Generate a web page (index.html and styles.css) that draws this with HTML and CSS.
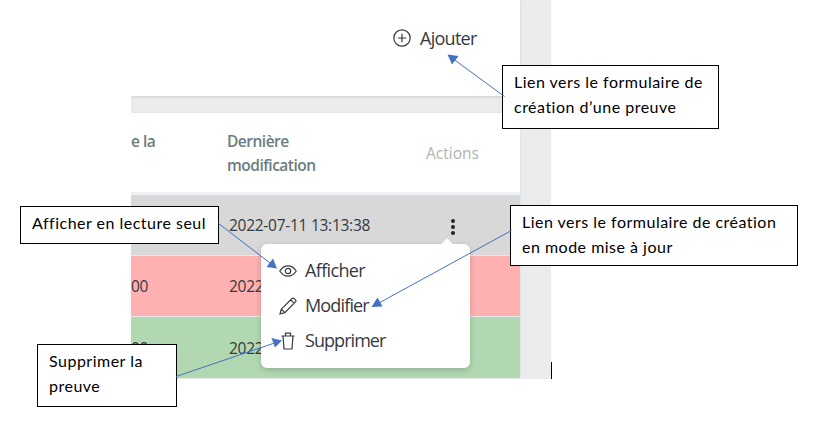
FILE: index.html
```html
<!DOCTYPE html>
<html lang="fr">
<head>
<meta charset="utf-8">
<title>Preuves</title>
<link rel="stylesheet" href="styles.css">
</head>
<body>
<main class="app">
  <section class="toolbar">
    <a class="add"><svg width="18" height="18" viewBox="0 0 18 18"><circle cx="9" cy="9" r="8.2"/><path d="M9 4.8v8.4M4.8 9h8.4"/></svg><span>Ajouter</span></a>
  </section>
  <section class="table">
    <div class="row head"><span>e la</span><span>Dernière<br>modification</span><span class="actions">Actions</span></div>
    <div class="row grey"><span></span><span class="date">2022-07-11 13:13:38</span><span class="dots"><i></i><i></i><i></i></span></div>
    <div class="row red"><span>00</span><span class="date">2022</span><span></span></div>
    <div class="row green"><span>00</span><span class="date">2022</span><span></span></div>
  </section>
</main>
<nav class="menu">
  <a><svg width="18" height="18" viewBox="0 0 18 18"><path d="M.8 9C3 5.500 5.700 3.800 9 3.800S15 5.500 17.200 9C15 12.500 12.300 14.200 9 14.200S3 12.500.8 9z"/><circle cx="9" cy="9" r="2.700"/></svg><span class="m1">Afficher</span></a>
  <a><svg width="18" height="18" viewBox="0 0 18 18"><path d="M1 17l1.300-4.800L13 1.500q1-.9 2-.1l1.500 1.500q.9 1 0 2L5.800 15.700zM11.700 2.900l3.500 3.500M2.500 12.200l3.300 3.400"/></svg><span class="m2">Modifier</span></a>
  <a><svg width="18" height="18" viewBox="0 0 18 18"><path d="M2.500 4h13M4 4l1 13h8l1-13M6.500 4V1.200h5V4"/></svg><span class="m3">Supprimer</span></a>
</nav>
<aside class="note note-add">Lien vers le formulaire de<br>création d’une preuve</aside>
<aside class="note note-view">Afficher en lecture seul</aside>
<aside class="note note-edit">Lien vers le formulaire de création<br>en mode mise à jour</aside>
<aside class="note note-delete">Supprimer la<br>preuve</aside>
<svg class="arrows" width="823" height="427" viewBox="0 0 823 427">
  <path d="M504.500 96.500L454 59.500M218.500 223.500L272 264.500M511.500 230.500L378 303.500M176 376.500L276 342.500"/>
  <path class="tip" d="M447.500 54.500L458.500 56L452 64.500zM277 268.500L266.500 267L273 258.500zM371.500 307L377.500 297.500L382.500 306.500zM282 340.500L275 347.500L271.500 338z"/>
</svg>
<i class="caret"></i>
</body>
</html>
```
FILE: styles.css
```css
body { margin: 0; width: 823px; height: 427px; position: relative; overflow: hidden; background: #fff; font-family: "Open Sans", sans-serif; color: #343a40; }
svg { fill: none; stroke: #343a40; stroke-width: 1.2; flex: none; }
.app { box-sizing: border-box; width: 420px; height: 379px; margin-left: 131px; padding-right: 31px; background: #ebecee; overflow: hidden; }
.toolbar { display: flex; justify-content: flex-end; box-sizing: border-box; height: 96px; padding: 26px 43px 0 0; margin-bottom: 17px; background: #fff; box-shadow: 0 1px 3px #00000020; }
.add { display: flex; gap: 9px; height: 24px; align-items: center; font-size: 18px; line-height: 24px; }
.add span { width: 57px; letter-spacing: -.72px; white-space: nowrap; }
.table { background: #fff; box-shadow: 0 0 2px #00000018; }
.row { display: grid; grid-template-columns: 96px 199px 94px; box-sizing: border-box; height: 61px; align-items: center; border-bottom: 1px solid #e5e7e9; font-size: 15.5px; letter-spacing: -.27px; white-space: nowrap; }
.head { height: 82px; border-bottom: 3px solid #f0f1f4; color: #6c7c80; font-weight: 600; line-height: 24px; align-items: start; padding-top: 16px; }
.head { letter-spacing: -.5px; }
.head .actions { color: #b2b2b2; font-weight: 400; padding-top: 12px; letter-spacing: 0; }
.grey { background: #d8d8d8; }
.red { background: #ffb1b1; }
.green { height: 62px; background: #b2d8b2; }
.date { padding-left: 2px; }
.dots { display: grid; gap: 2px; padding: 4px 0 0 25px; }
.dots i { width: 4px; height: 4px; border-radius: 50%; background: #212529; }
.menu { position: absolute; left: 261px; top: 244px; width: 209px; height: 124px; padding: 9px 0 0 18px; box-sizing: border-box; border-radius: 6px; background: #fff; box-shadow: 0 2px 6px #00000030; }
.menu::before { content: ""; position: absolute; left: 182px; top: -4px; width: 8px; height: 8px; transform: rotate(45deg); background: #fff; }
.menu a { display: flex; height: 35px; align-items: center; gap: 8px; font-size: 18px; line-height: 35px; letter-spacing: -.85px; }
.menu .m1 { letter-spacing: -.65px; }
.menu .m3 { letter-spacing: -.95px; }
.note { position: absolute; box-sizing: border-box; border: 1px solid #000; background: #fff; color: #000; padding: 4px 11px; font: 16px/25px Lato, sans-serif; letter-spacing: .49px; white-space: nowrap; }
.note-add { left: 502px; top: 65px; width: 217px; height: 64px; }
.note-view { left: 20px; top: 206px; width: 199px; height: 38px; }
.note-edit { left: 510px; top: 205px; width: 288px; height: 61px; }
.note-delete { left: 37px; top: 344px; width: 140px; height: 63px; }
.note { padding-top: 3px; }
.arrows { position: absolute; left: 0; top: 0; stroke: #4472c4; stroke-width: 1; }
.arrows .tip { fill: #4472c4; stroke: none; }
.caret { position: absolute; left: 551px; top: 362px; width: 1px; height: 17px; background: #000; }
```
